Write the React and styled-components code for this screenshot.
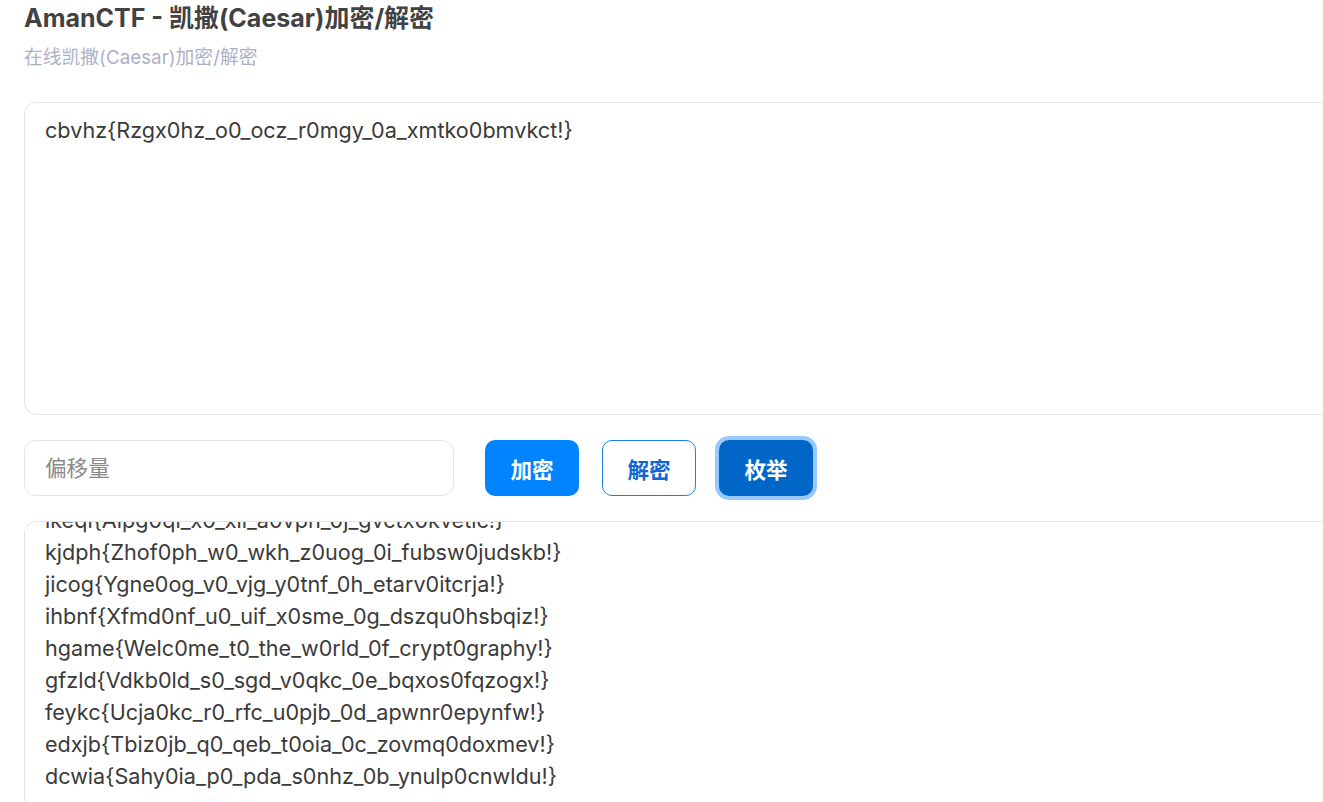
import { useEffect, useRef } from "react";
import styled, { createGlobalStyle } from "styled-components";

const cipher = "cbvhz{Rzgx0hz_o0_ocz_r0mgy_0a_xmtko0bmvkct!}";

// décalage simple, lettres seulement
function shift(text, n) {
  return text.replace(/[a-zA-Z]/g, (c) => {
    const base = c <= "Z" ? 65 : 97;
    return String.fromCharCode(((c.charCodeAt(0) - base + n + 26) % 26) + base);
  });
}

const results = [];
for (let k = 1; k <= 25; k++) results.push(shift(cipher, -k));

const GlobalStyle = createGlobalStyle`
  html, body {
    margin: 0;
    background: #fff;
    overflow: hidden;
  }
  body {
    font-family: Inter, "Noto Sans CJK SC", sans-serif;
  }
`;

const Page = styled.div`
  width: 1360px;
  padding: 0 24px;
`;

const Title = styled.h1`
  margin: 0;
  padding-top: 3px;
  font-size: 25px;
  line-height: 30px;
  font-weight: 700;
  color: #424242;
`;

const Subtitle = styled.p`
  margin: 12px 0 0;
  font-size: 18.8px;
  line-height: 26px;
  color: #adb1c6;
`;

const TextBox = styled.textarea`
  display: block;
  box-sizing: border-box;
  width: 100%;
  height: ${(p) => p.$height}px;
  margin-top: ${(p) => p.$top}px;
  padding: 11px 20px ${(p) => p.$bottom || 12}px;
  border: 1px solid #e3e3e3;
  border-radius: 12px;
  font-family: Inter, "Noto Sans CJK SC", sans-serif;
  font-size: 21.6px;
  line-height: 32px;
  color: #3a3a3a;
  resize: none;
  outline: none;
  background: #fff;
`;

const Controls = styled.div`
  display: flex;
  align-items: center;
  gap: 23px;
  margin-top: 25px;
`;

const OffsetInput = styled.input`
  box-sizing: border-box;
  width: 430px;
  height: 56px;
  margin-right: 8px;
  padding: 0 20px;
  border: 1px solid #e3e3e3;
  border-radius: 12px;
  font-family: Inter, "Noto Sans CJK SC", sans-serif;
  font-size: 21.6px;
  outline: none;
  &::placeholder {
    color: #8a8a8a;
  }
`;

const Button = styled.button`
  box-sizing: border-box;
  width: 94px;
  height: 56px;
  border-radius: 10px;
  border: 1px solid ${(p) => (p.$variant === "outline" ? "#1a7fe8" : "transparent")};
  background: ${(p) =>
    p.$variant === "outline" ? "#fff" : p.$variant === "active" ? "#0066c8" : "#0084ff"};
  color: ${(p) => (p.$variant === "outline" ? "#1066d4" : "#fff")};
  box-shadow: ${(p) => (p.$variant === "active" ? "0 0 0 4px #98caff" : "none")};
  font-family: "Noto Sans CJK SC", sans-serif;
  font-size: 21.6px;
  font-weight: 700;
  cursor: pointer;
`;

export default function App() {
  const outRef = useRef(null);

  useEffect(() => {
    // défiler tout en bas de la liste
    if (outRef.current) outRef.current.scrollTop = outRef.current.scrollHeight;
  }, []);

  return (
    <Page>
      <GlobalStyle />
      <Title>AmanCTF - 凯撒(Caesar)加密/解密</Title>
      <Subtitle>在线凯撒(Caesar)加密/解密</Subtitle>
      <TextBox $height={313} $top={31} defaultValue={cipher} spellCheck={false} />
      <Controls>
        <OffsetInput placeholder="偏移量" />
        <Button>加密</Button>
        <Button $variant="outline">解密</Button>
        <Button $variant="active">枚举</Button>
      </Controls>
      <TextBox
        ref={outRef}
        $height={290}
        $bottom={18}
        $top={25}
        readOnly
        value={results.join("\n")}
        spellCheck={false}
      />
    </Page>
  );
}
